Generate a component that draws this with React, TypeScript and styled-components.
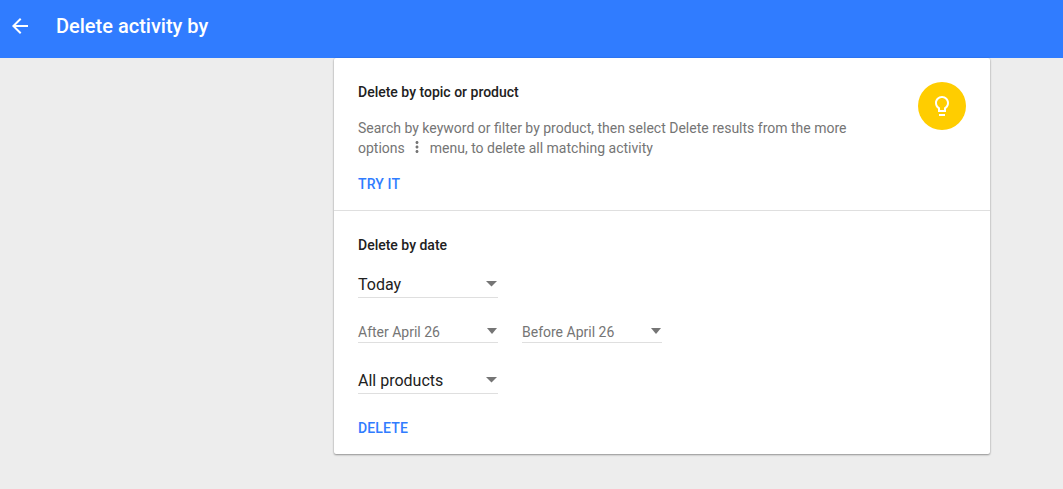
import React from 'react';
import styled, { createGlobalStyle } from 'styled-components';

const GlobalStyle = createGlobalStyle`
  * { box-sizing: border-box; }
  body {
    margin: 0;
    background: #ededed;
    font-family: Roboto, "Liberation Sans", sans-serif;
    color: #212121;
  }
`;

const Page = styled.div`
  min-height: 489px;
`;

const Header = styled.header`
  display: flex;
  align-items: center;
  gap: 24px;
  height: 58px;
  padding: 0 8px 6px;
  background: #307cff;
  color: #fff;
`;

const Icon = styled.svg<{ $size?: number }>`
  display: block;
  flex: none;
  width: ${({ $size = 24 }) => $size}px;
  height: ${({ $size = 24 }) => $size}px;
  fill: currentColor;
`;

const Title = styled.h1`
  margin: 0;
  font-size: 20px;
  font-weight: 500;
  line-height: 24px;
`;

const Card = styled.main`
  width: 656px;
  height: 396px;
  margin-left: 334px;
  background: #fff;
  border-radius: 2px;
  box-shadow: 0 1px 2px rgba(0, 0, 0, 0.36), 0 0 2px rgba(0, 0, 0, 0.14);
`;

const TopicSection = styled.section`
  display: flex;
  justify-content: space-between;
  align-items: flex-start;
  height: 153px;
  padding: 24px;
  border-bottom: 1px solid #dfdfdf;
`;

const DateSection = styled.section`
  padding: 24px;
`;

const Heading = styled.h2`
  margin: 0;
  font-size: 14px;
  font-weight: 500;
  line-height: 20px;
`;

const Description = styled.p`
  width: 510px;
  margin: 16px 0;
  color: #757575;
  font-size: 14px;
  line-height: 20px;
`;

const MenuDots = styled(Icon)`
  display: inline-block;
  margin: 0 4px 0 3px;
  vertical-align: -3px;
`;

const TextButton = styled.button`
  display: block;
  padding: 0;
  border: 0;
  background: none;
  color: #307cff;
  font: 500 14px/20px Roboto, "Liberation Sans", sans-serif;
  letter-spacing: 0.14px;
  text-transform: uppercase;
`;

const Badge = styled.div`
  display: flex;
  align-items: center;
  justify-content: center;
  width: 48px;
  height: 48px;
  border-radius: 50%;
  background: #ffcd00;
  color: #fff;
`;

const Fields = styled.div`
  display: flex;
  flex-direction: column;
  padding: 18px 0 24px;
`;

const DateRow = styled.div`
  display: flex;
  gap: 24px;
  margin: 23px 0 26px;
`;

const Select = styled.div<{ $small?: boolean }>`
  display: flex;
  justify-content: space-between;
  align-items: flex-start;
  width: 140px;
  height: ${({ $small }) => ($small ? 22 : 25)}px;
  padding-right: 1px;
  border-bottom: 1px solid #dfdfdf;
  color: ${({ $small }) => ($small ? '#757575' : '#212121')};
  font-size: ${({ $small }) => ($small ? 14 : 16)}px;
  line-height: ${({ $small }) => ($small ? 22 : 24)}px;
`;

const Arrow = styled.svg<{ $small?: boolean }>`
  display: block;
  width: ${({ $small }) => ($small ? 10 : 11)}px;
  height: ${({ $small }) => ($small ? 6 : 5.5)}px;
  margin-top: ${({ $small }) => ($small ? 7 : 8)}px;
  fill: #757575;
`;

function Dropdown({ label, small }: { label: string; small?: boolean }) {
  return (
    <Select $small={small}>
      {label}
      <Arrow $small={small} viewBox="0 0 10 5" preserveAspectRatio="none">
        <path d="M0 0h10L5 5z" />
      </Arrow>
    </Select>
  );
}

export default function App() {
  return (
    <Page>
      <GlobalStyle />
      <Header>
        <Icon viewBox="0 0 24 24">
          <path d="M20 11H7.83l5.59-5.59L12 4l-8 8 8 8 1.41-1.41L7.83 13H20v-2z" />
        </Icon>
        <Title>Delete activity by</Title>
      </Header>
      <Card>
        <TopicSection>
          <div>
            <Heading>Delete by topic or product</Heading>
            <Description>
              Search by keyword or filter by product, then select Delete results from the more options
              <MenuDots $size={18} viewBox="0 0 24 24">
                <path d="M12 8c1.1 0 2-.9 2-2s-.9-2-2-2-2 .9-2 2 .9 2 2 2zm0 2c-1.1 0-2 .9-2 2s.9 2 2 2 2-.9 2-2-.9-2-2-2zm0 6c-1.1 0-2 .9-2 2s.9 2 2 2 2-.9 2-2-.9-2-2-2z" />
              </MenuDots>
              menu, to delete all matching activity
            </Description>
            <TextButton>Try it</TextButton>
          </div>
          <Badge>
            <Icon viewBox="0 0 24 24">
              <path d="M9 20h6v2H9zM12 2C8.14 2 5 5.14 5 9c0 2.38 1.19 4.47 3 5.74V18h8v-3.26c1.81-1.27 3-3.36 3-5.74 0-3.86-3.14-7-7-7zm2.85 11.1l-.85.6V16h-4v-2.3l-.85-.6C7.8 12.16 7 10.63 7 9c0-2.76 2.24-5 5-5s5 2.24 5 5c0 1.63-.8 3.16-2.15 4.1z" />
            </Icon>
          </Badge>
        </TopicSection>
        <DateSection>
          <Heading>Delete by date</Heading>
          <Fields>
            <Dropdown label="Today" />
            <DateRow>
              <Dropdown small label="After April 26" />
              <Dropdown small label="Before April 26" />
            </DateRow>
            <Dropdown label="All products" />
          </Fields>
          <TextButton>Delete</TextButton>
        </DateSection>
      </Card>
    </Page>
  );
}
